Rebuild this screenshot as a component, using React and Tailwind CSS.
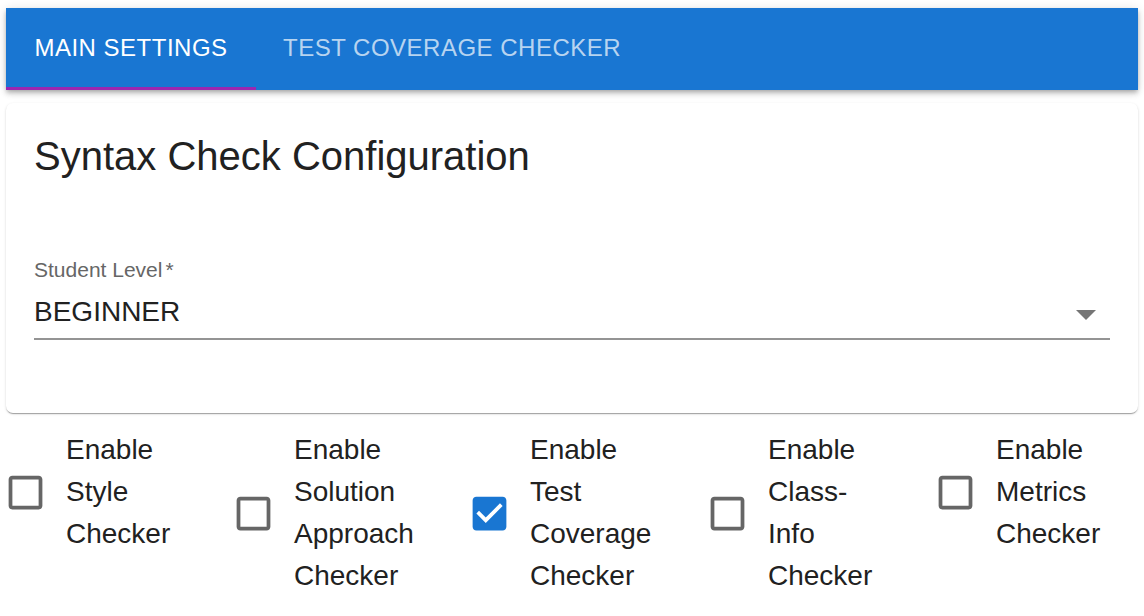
import { useState } from 'react';

// MUI-like checkbox icons (24 unit viewBox)
const UNCHECKED = 'M19 5v14H5V5h14m0-2H5c-1.1 0-2 .9-2 2v14c0 1.1.9 2 2 2h14c1.1 0 2-.9 2-2V5c0-1.1-.9-2-2-2z';
const CHECKED =
  'M19 3H5c-1.11 0-2 .9-2 2v14c0 1.1.89 2 2 2h14c1.11 0 2-.9 2-2V5c0-1.1-.89-2-2-2zm-9 14l-5-5 1.41-1.41L10 14.17l7.59-7.59L19 8l-9 9z';

const checkers = [
  { label: 'Enable Style Checker', checked: false },
  { label: 'Enable Solution Approach Checker', checked: false },
  { label: 'Enable Test Coverage Checker', checked: true },
  { label: 'Enable Class-Info Checker', checked: false },
  { label: 'Enable Metrics Checker', checked: false },
];

function CheckItem({ label, checked, onToggle }) {
  return (
    <label className="flex items-center gap-[18px] cursor-pointer">
      <svg
        viewBox="0 0 24 24"
        className={checked ? 'w-[45px] h-[45px] shrink-0 fill-[#1976d2]' : 'w-[45px] h-[45px] shrink-0 fill-[#666666]'}
        onClick={onToggle}
      >
        <path d={checked ? CHECKED : UNCHECKED} />
      </svg>
      <span className="w-[124px] text-[28px] leading-[42px] text-[#212121]">{label}</span>
    </label>
  );
}

export default function App() {
  const [tab, setTab] = useState(0);
  const [state, setState] = useState(checkers.map((c) => c.checked));

  return (
    <div className="min-h-screen bg-white px-[6px] pt-[8px] font-['Liberation_Sans',Arial,sans-serif]">
      {/* Top tab bar */}
      <header className="flex h-[82px] bg-[#1976d2] shadow-[0_2px_4px_-1px_rgba(0,0,0,0.2),0_4px_5px_0_rgba(0,0,0,0.14),0_1px_10px_0_rgba(0,0,0,0.12)]">
        {['Main Settings', 'Test Coverage Checker'].map((t, i) => (
          <button
            key={t}
            onClick={() => setTab(i)}
            className={
              i === 0
                ? 'relative flex w-[250px] items-center justify-center pb-[2px] text-[24px] leading-none uppercase tracking-[0.5px] text-white'
                : 'relative flex items-center px-[27px] pb-[2px] text-[24px] leading-none uppercase tracking-[0.5px] text-white/70'
            }
          >
            {t}
            {tab === i && <span className="absolute bottom-0 left-0 right-0 h-[3px] bg-[#9c27b0]" />}
          </button>
        ))}
      </header>

      {/* Config card */}
      <div className="mt-[13px] h-[310px] rounded-[7px] bg-white px-[28px] pt-[33px] shadow-[0_2px_1px_-1px_rgba(0,0,0,0.2),0_1px_1px_0_rgba(0,0,0,0.14),0_1px_3px_0_rgba(0,0,0,0.12)]">
        <h2 className="text-[40px] leading-[40px] text-[#212121]">Syntax Check Configuration</h2>
        <div className="relative mt-[83px]">
          <div className="text-[21px] leading-[21px] text-[#666666]">
            Student Level<span className="ml-[3px]">*</span>
          </div>
          <div className="mt-[18px] text-[28px] leading-[28px] text-[#212121]">BEGINNER</div>
          <div className="mt-[12px] h-[2px] bg-[#949494]" />
          <svg viewBox="0 0 24 24" className="absolute right-0 top-[31px] w-[48px] h-[48px] fill-[#757575]">
            <path d="M7 10l5 5 5-5z" />
          </svg>
        </div>
      </div>

      {/* Checker toggles */}
      <div className="mt-[16px] -ml-[3px] grid grid-cols-[228px_236px_238px_228px_1fr] items-start">
        {checkers.map((c, i) => (
          <CheckItem
            key={c.label}
            label={c.label}
            checked={state[i]}
            onToggle={() => setState((s) => s.map((v, j) => (j === i ? !v : v)))}
          />
        ))}
      </div>
    </div>
  );
}
